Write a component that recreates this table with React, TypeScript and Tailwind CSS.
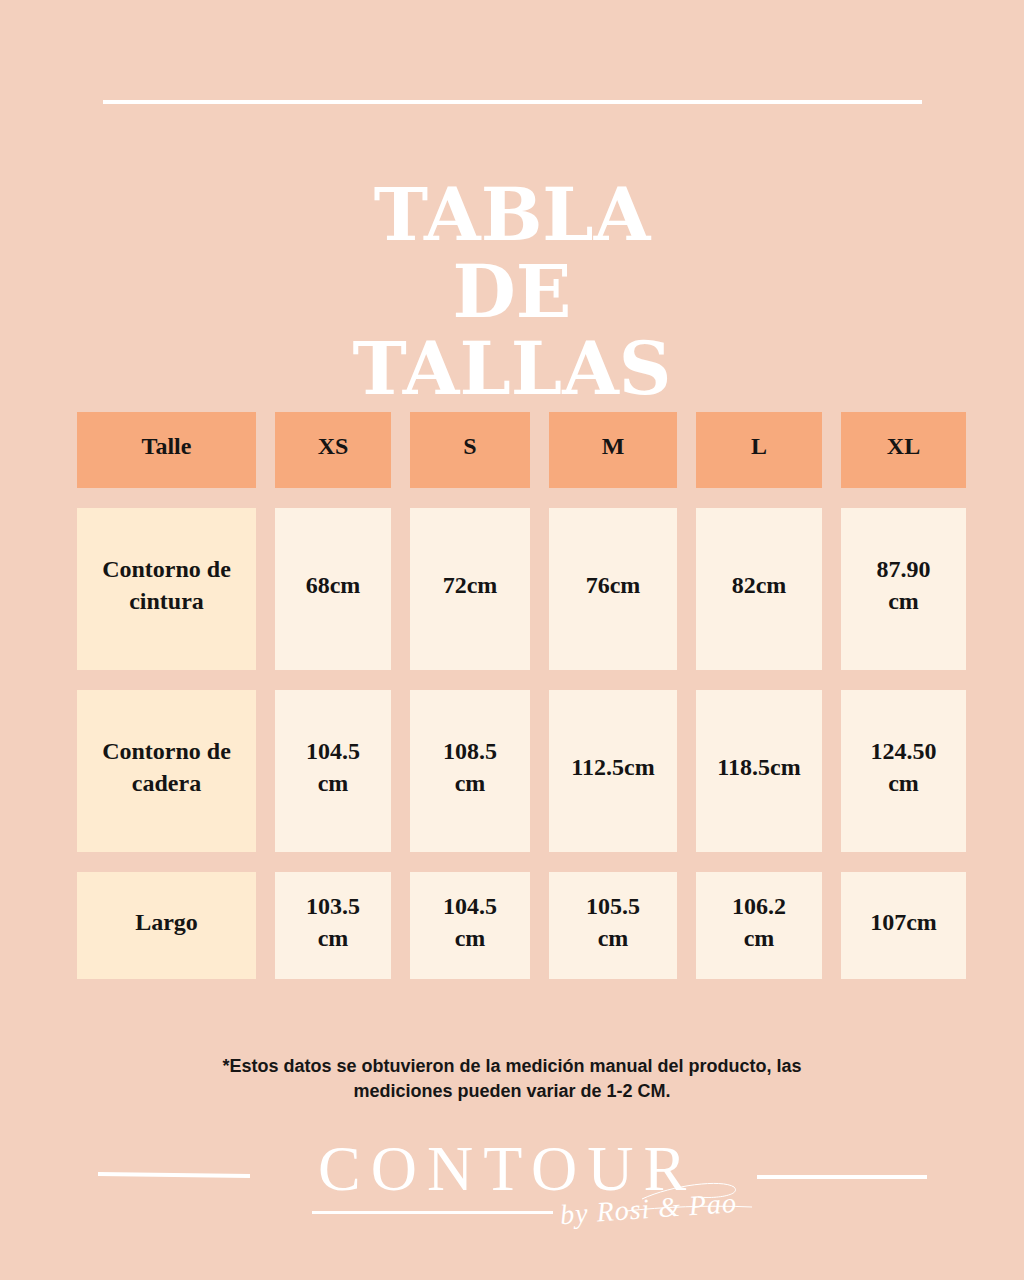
const header = ["Talle", "XS", "S", "M", "L", "XL"];

const rows: string[][][] = [
  [["Contorno de", "cintura"], ["68cm"], ["72cm"], ["76cm"], ["82cm"], ["87.90", "cm"]],
  [["Contorno de", "cadera"], ["104.5", "cm"], ["108.5", "cm"], ["112.5cm"], ["118.5cm"], ["124.50", "cm"]],
  [["Largo"], ["103.5", "cm"], ["104.5", "cm"], ["105.5", "cm"], ["106.2", "cm"], ["107cm"]],
];

function Cell({ lines, first }: { lines: string[]; first: boolean }) {
  return (
    <div
      className={`flex flex-col items-center justify-center pb-[8px] text-center text-[24px] leading-[32px] font-bold text-[#141414] ${
        first ? "bg-[#FEEBD0]" : "bg-[#FDF2E4]"
      }`}
    >
      {lines.map((l, i) => (
        <span key={i}>{l}</span>
      ))}
    </div>
  );
}

export default function App() {
  return (
    <div className="w-[1024px] h-[1280px] bg-[#F3D0BE] flex flex-col items-center font-['Liberation_Serif',serif]">
      <div className="mt-[100px] h-[4px] w-[819px] bg-white" />

      <h1 className="mt-[72px] text-center text-white font-['DejaVu_Serif',serif] font-bold text-[73px] leading-[77px]">
        TABLA
        <br />
        DE
        <br />
        TALLAS
      </h1>

      <div className="mt-[5px] self-start ml-[77px] grid grid-cols-[179px_116px_120px_128px_126px_125px] grid-rows-[76px_162px_162px_107px] gap-x-[19px] gap-y-[20px]">
        {header.map((h) => (
          <div
            key={h}
            className="bg-[#F7AA7D] flex items-center justify-center pb-[8px] text-[24px] font-bold text-[#141414]"
          >
            {h}
          </div>
        ))}
        {rows.map((r, ri) =>
          r.map((c, ci) => <Cell key={`${ri}-${ci}`} lines={c} first={ci === 0} />)
        )}
      </div>

      <p className="mt-[75px] w-[700px] text-center font-['Liberation_Sans',sans-serif] font-bold text-[18px] leading-[25px] text-[#161616]">
        *Estos datos se obtuvieron de la medición manual del producto, las
        <br />
        mediciones pueden variar de 1-2 CM.
      </p>

      <div className="mt-[33px] w-[1024px] flex items-start">
        <div className="ml-[98px] mt-[36px] h-[4px] w-[152px] bg-white rotate-[0.8deg]" />
        <div className="relative ml-[62px] w-[445px] h-[110px]">
          <div className="ml-[6px] text-white text-[64px] leading-[64px] tracking-[10px] font-normal">
            CONTOUR
          </div>
          <div className="mt-[10px] h-[3px] w-[241px] bg-white" />
          <div className="absolute left-[248px] top-[56px] -rotate-[4deg] text-white italic font-light text-[28px] leading-[32px] tracking-[1px]">
            by Rosi &amp; Pao
          </div>
          <svg className="absolute left-[300px] top-[40px]" width="150" height="40" viewBox="0 0 150 40" fill="none">
            <path d="M14 34 C 50 30, 95 28, 140 30" stroke="white" strokeWidth="1" />
            <path d="M30 22 C 60 8, 110 2, 122 10 C 130 18, 104 22, 86 20" stroke="white" strokeWidth="1" />
          </svg>
        </div>
        <div className="mt-[38px] h-[4px] w-[170px] bg-white" />
      </div>
    </div>
  );
}
